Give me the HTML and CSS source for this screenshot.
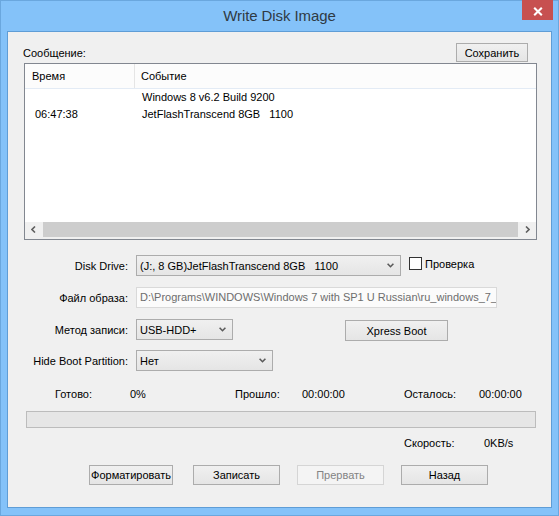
FILE: index.html
```html
<!DOCTYPE html>
<html lang="ru">
<head>
<meta charset="utf-8">
<title>Write Disk Image</title>
<link rel="stylesheet" href="styles.css">
</head>
<body>
<div class="window">
  <div class="titlebar">
    <div></div>
    <div class="title">Write Disk Image</div>
    <div class="close"><svg width="10" height="9" viewBox="0 0 10 9"><path d="M1.2 0.8 L8.8 8.2 M8.8 0.8 L1.2 8.2" stroke="#fff" stroke-width="2.1"/></svg></div>
  </div>
  <div class="client">
    <div class="msg-head">
      <span class="lbl">Сообщение:</span>
      <div class="btn save">Сохранить</div>
    </div>
    <div class="listbox">
      <div class="lv-head">
        <div class="hc1">Время</div>
        <div class="hc2">Событие</div>
      </div>
      <div class="lv-body">
        <div class="lv-row"><div class="rc1"></div><div class="rc2">Windows 8 v6.2 Build 9200</div></div>
        <div class="lv-row"><div class="rc1">06:47:38</div><div class="rc2">JetFlashTranscend 8GB&nbsp;&nbsp;&nbsp;1100</div></div>
      </div>
      <div class="hscroll">
        <div class="arr"><svg width="5" height="7" viewBox="0 0 5 7"><path d="M4 0.5 L1 3.5 L4 6.5" fill="none" stroke="#606060" stroke-width="1.6"/></svg></div>
        <div class="thumb"></div>
        <div class="arr"><svg width="5" height="7" viewBox="0 0 5 7"><path d="M1 0.5 L4 3.5 L1 6.5" fill="none" stroke="#606060" stroke-width="1.6"/></svg></div>
      </div>
    </div>

    <div class="frow r1">
      <span class="flbl">Disk Drive:</span>
      <div class="combo w-drive"><span>(J:, 8 GB)JetFlashTranscend 8GB&nbsp;&nbsp;&nbsp;1100</span><svg class="chev" width="7" height="5" viewBox="0 0 7 5"><path d="M0.6 0.8 L3.5 3.7 L6.4 0.8" fill="none" stroke="#5a5a5a" stroke-width="1.6"/></svg></div>
      <div class="check"></div>
      <span class="check-lbl">Проверка</span>
    </div>
    <div class="frow r2">
      <span class="flbl">Файл образа:</span>
      <div class="field">D:\Programs\WINDOWS\Windows 7 with SP1 U Russian\ru_windows_7_</div>
    </div>
    <div class="frow r3">
      <span class="flbl">Метод записи:</span>
      <div class="combo w-method"><span>USB-HDD+</span><svg class="chev" width="7" height="5" viewBox="0 0 7 5"><path d="M0.6 0.8 L3.5 3.7 L6.4 0.8" fill="none" stroke="#5a5a5a" stroke-width="1.6"/></svg></div>
      <div class="btn xpress">Xpress Boot</div>
    </div>
    <div class="frow r4">
      <span class="flbl">Hide Boot Partition:</span>
      <div class="combo w-hide"><span>Нет</span><svg class="chev" width="7" height="5" viewBox="0 0 7 5"><path d="M0.6 0.8 L3.5 3.7 L6.4 0.8" fill="none" stroke="#5a5a5a" stroke-width="1.6"/></svg></div>
    </div>

    <div class="stats">
      <span class="s1">Готово:</span>
      <span class="s2">0%</span>
      <span class="s3">Прошло:</span>
      <span class="s4">00:00:00</span>
      <span class="s5">Осталось:</span>
      <span>00:00:00</span>
    </div>
    <div class="progress"></div>
    <div class="speed">
      <span class="sp1">Скорость:</span>
      <span>0KB/s</span>
    </div>
    <div class="actions">
      <div class="btn b-format">Форматировать</div>
      <div class="btn b-write">Записать</div>
      <div class="btn b-stop disabled">Прервать</div>
      <div class="btn b-back">Назад</div>
    </div>
  </div>
</div>
</body>
</html>
```
FILE: styles.css
```css
html, body {
  margin: 0;
  padding: 0;
}
body {
  width: 559px;
  height: 516px;
  overflow: hidden;
  font-family: "Liberation Sans", Arial, sans-serif;
  font-size: 11px;
  color: #000;
}
.window {
  width: 559px;
  height: 516px;
  box-sizing: border-box;
  border: 1px solid #6aa7de;
  background: #84c2f9;
  display: flex;
  flex-direction: column;
}
.titlebar {
  height: 30px;
  display: grid;
  grid-template-columns: 1fr auto 1fr;
}
.title {
  font-size: 15px;
  color: #2f3a44;
  line-height: 28px;
  padding-top: 1px;
  letter-spacing: -0.1px;
}
.close {
  justify-self: end;
  align-self: start;
  width: 31px;
  height: 20px;
  margin-top: -1px;
  margin-right: 5px;
  background: #c75050;
  display: flex;
  align-items: center;
  justify-content: center;
  padding-top: 2px;
  box-sizing: border-box;
}
.client {
  margin: 0 6px 7px 6px;
  height: 477px;
  box-sizing: border-box;
  border: 1px solid #5f9dd6;
  background: #f0f0f0;
  display: flex;
  flex-direction: column;
}
.msg-head {
  height: 31px;
  box-sizing: border-box;
  padding: 11px 23px 1px 15px;
  display: flex;
  align-items: center;
  justify-content: space-between;
}
.btn {
  box-sizing: border-box;
  border: 1px solid #acacac;
  background: linear-gradient(#f0f0f0, #e5e5e5);
  display: flex;
  align-items: center;
  justify-content: center;
  color: #000;
}
.btn.disabled {
  border-color: #d5d5d5;
  background: #f4f4f4;
  color: #838383;
}
.save {
  width: 72px;
  height: 19px;
}
.listbox {
  margin-left: 16px;
  width: 513px;
  height: 177px;
  box-sizing: border-box;
  border: 1px solid #828790;
  background: #fff;
  display: flex;
  flex-direction: column;
}
.lv-head {
  height: 25px;
  box-sizing: border-box;
  border-bottom: 1px solid #e3ebf5;
  display: flex;
  background: #fcfcfc;
}
.hc1 {
  width: 110px;
  box-sizing: border-box;
  border-right: 1px solid #e5e5e5;
  padding-left: 7px;
  line-height: 24px;
}
.hc2 {
  padding-left: 6px;
  line-height: 24px;
}
.lv-body {
  flex: 1;
}
.lv-row {
  height: 17px;
  line-height: 17px;
  display: flex;
}
.rc1 {
  width: 117px;
  box-sizing: border-box;
  padding-left: 10px;
}
.hscroll {
  height: 17px;
  display: flex;
  background: #f0f0f0;
}
.arr {
  width: 17px;
  height: 15px;
  display: flex;
  align-items: center;
  justify-content: center;
}
.thumb {
  flex: 1;
  height: 15px;
  margin: 0 1px;
  background: #cdcdcd;
}
.frow {
  display: flex;
  align-items: center;
  height: 21px;
}
.r1 { margin-top: 15px; }
.r2 { margin-top: 11px; }
.r3 { margin-top: 11px; }
.r4 { margin-top: 10px; }
.flbl {
  width: 120px;
  text-align: right;
  margin-right: 8px;
  flex: none;
}
.combo {
  height: 21px;
  box-sizing: border-box;
  border: 1px solid #acacac;
  background: linear-gradient(#f0f0f0, #e5e5e5);
  display: flex;
  align-items: center;
  justify-content: space-between;
  padding: 0 6px 0 3px;
  white-space: nowrap;
}
.chev { flex: none; }
.w-drive { width: 265px; }
.w-method { width: 97px; }
.w-hide { width: 137px; }
.check {
  width: 13px;
  height: 13px;
  box-sizing: border-box;
  border: 1px solid #333;
  background: #fff;
  margin-left: 8px;
  margin-top: -4px;
}
.check-lbl {
  margin-left: 3px;
  margin-top: -4px;
}
.field {
  width: 361px;
  height: 21px;
  box-sizing: border-box;
  border: 1px solid #d9d9d9;
  background: #fbfbfb;
  color: #6d6d6d;
  padding-left: 3px;
  line-height: 19px;
  white-space: nowrap;
  overflow: hidden;
}
.xpress {
  width: 103px;
  height: 21px;
  margin-left: 112px;
  margin-top: 2px;
}
.stats {
  margin-top: 16px;
  height: 14px;
  line-height: 14px;
  display: flex;
  padding-left: 47px;
}
.stats span { flex: none; }
.s1 { width: 75px; }
.s2 { width: 105px; }
.s3 { width: 67px; }
.s4 { width: 102px; }
.s5 { width: 75px; }
.progress {
  margin-top: 10px;
  margin-left: 18px;
  width: 510px;
  height: 17px;
  box-sizing: border-box;
  border: 1px solid #bcbcbc;
  background: #e6e6e6;
}
.speed {
  margin-top: 8px;
  height: 14px;
  line-height: 14px;
  display: flex;
  padding-left: 396px;
}
.sp1 { width: 80px; }
.actions {
  margin-top: 15px;
  display: flex;
  padding-left: 81px;
}
.actions .btn { height: 20px; width: 87px; }
.actions .b-format { width: 84px; }
.b-write { margin-left: 20px; }
.b-stop { margin-left: 17px; }
.b-back { margin-left: 17px; }
```
